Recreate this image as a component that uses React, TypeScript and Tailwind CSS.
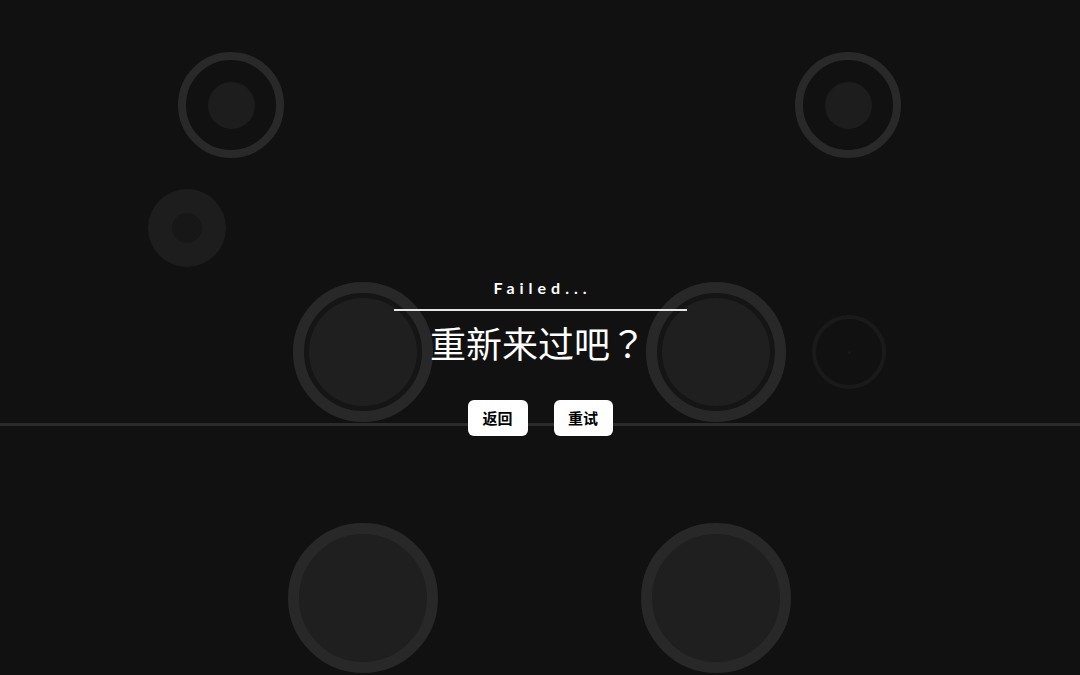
import React from 'react';

type Pad = {
  x: number;
  y: number;
  kind: 'target' | 'knob' | 'pad' | 'drum' | 'faint';
};

// drum pads laid out on the stage, centres in px
const pads: Pad[] = [
  { x: 231, y: 105, kind: 'target' },
  { x: 848, y: 105, kind: 'target' },
  { x: 187, y: 228, kind: 'knob' },
  { x: 363, y: 352, kind: 'pad' },
  { x: 716, y: 352, kind: 'pad' },
  { x: 849, y: 352, kind: 'faint' },
  { x: 363, y: 598, kind: 'drum' },
  { x: 716, y: 598, kind: 'drum' },
];

const PadShape: React.FC<{ pad: Pad }> = ({ pad }) => {
  const pos = { left: pad.x, top: pad.y };
  if (pad.kind === 'target') {
    return (
      <div style={pos} className="absolute -translate-x-1/2 -translate-y-1/2 w-[106px] h-[106px] rounded-full border-[8px] border-[#292929] flex items-center justify-center">
        <div className="w-[47px] h-[47px] rounded-full bg-[#1d1d1d]" />
      </div>
    );
  }
  if (pad.kind === 'knob') {
    return (
      <div style={pos} className="absolute -translate-x-1/2 -translate-y-1/2 w-[78px] h-[78px] rounded-full bg-[#1d1d1d] flex items-center justify-center">
        <div className="w-[30px] h-[30px] rounded-full bg-[#171717]" />
      </div>
    );
  }
  if (pad.kind === 'pad') {
    return (
      <div style={pos} className="absolute -translate-x-1/2 -translate-y-1/2 w-[140px] h-[140px] rounded-full border-[11px] border-[#282828] bg-[#151515] flex items-center justify-center">
        <div className="w-[108px] h-[108px] rounded-full bg-[#1f1f1f]" />
      </div>
    );
  }
  if (pad.kind === 'drum') {
    return (
      <div style={pos} className="absolute -translate-x-1/2 -translate-y-1/2 w-[150px] h-[150px] rounded-full border-[11px] border-[#282828] bg-[#1f1f1f]" />
    );
  }
  return (
    <div style={pos} className="absolute -translate-x-1/2 -translate-y-1/2 w-[74px] h-[74px] rounded-full border-[4px] border-[#1a1a1a] flex items-center justify-center">
      <div className="w-[3px] h-[3px] rounded-full bg-[#1a1a1a]" />
    </div>
  );
};

export default function App() {
  return (
    <div className="relative w-[1080px] h-[675px] overflow-hidden bg-[#111111] font-['Noto_Sans_CJK_SC',sans-serif]">
      {/* judgement line */}
      <div className="absolute left-0 right-0 top-[423px] h-[3px] bg-[#2b2b2b]" />

      {pads.map((p, i) => (
        <PadShape key={i} pad={p} />
      ))}

      {/* result panel */}
      <div className="absolute inset-0 flex flex-col items-center pt-[278px]">
        <p className="font-['Lato',sans-serif] font-bold text-[16px] leading-[20px] tracking-[5px] pl-[5px] text-white">
          Failed...
        </p>
        <div className="mt-[11px] w-[293px] h-[2px] bg-[#e6e6e6]" />
        <h1 className="mt-[9px] pr-[4px] text-[36px] leading-[44px] text-white font-normal font-['Noto_Sans_CJK_SC',sans-serif]">
          重新来过吧<span className="font-['Noto_Sans_CJK_TC',sans-serif]">？</span>
        </h1>
        <div className="mt-[36px] flex gap-[26px]">
          <button className="w-[60px] h-[36px] rounded-[6px] bg-white text-black text-[15px] font-bold font-['Noto_Sans_CJK_SC',sans-serif]">
            返回
          </button>
          <button className="w-[59px] h-[36px] rounded-[6px] bg-white text-black text-[15px] font-bold font-['Noto_Sans_CJK_SC',sans-serif]">
            重试
          </button>
        </div>
      </div>
    </div>
  );
}
